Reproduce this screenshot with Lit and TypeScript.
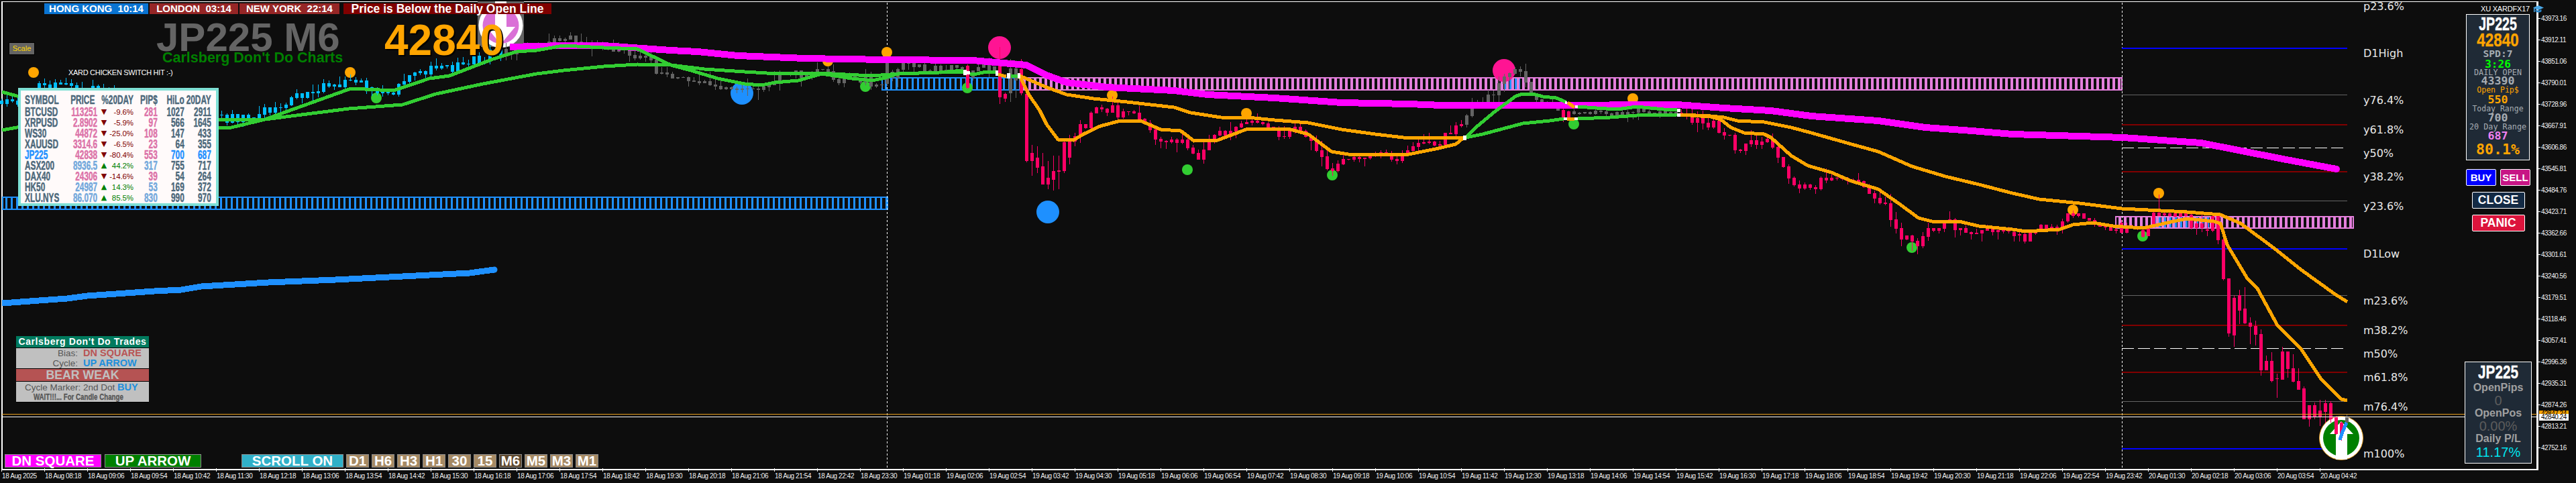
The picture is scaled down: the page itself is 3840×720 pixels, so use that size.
import { LitElement, html, svg, css } from 'lit'
import { customElement } from 'lit/decorators.js'

type Pt = [number, number]
// bodyTop, bodyBottom, wickTop, wickBottom
type Bar = [number, number, number, number]

// chart geometry is read straight from the screenshot, in page pixels
const candlePath: Pt[] = [
  [2, 150], [28, 152], [45, 128], [64, 125], [115, 130], [200, 150], [325, 178], [340, 175], [385, 172],
  [400, 160], [430, 155], [445, 143], [470, 135], [490, 125], [515, 120], [530, 122], [560, 140], [590, 137],
  [595, 125], [610, 113], [640, 105], [680, 100], [700, 92], [725, 85], [740, 75], [750, 75], [800, 68],
  [830, 55], [840, 55], [870, 62], [900, 70], [950, 80], [975, 100], [1000, 113], [1050, 123], [1070, 130],
  [1100, 133], [1120, 133], [1150, 128], [1155, 115], [1200, 110], [1215, 100], [1235, 105], [1250, 118],
  [1280, 120], [1315, 122], [1345, 100], [1390, 100], [1440, 100], [1470, 100], [1500, 115], [1522, 118],
  [1600, 210], [1610, 192], [1625, 175], [1640, 160], [1660, 165], [1680, 170], [1700, 180], [1715, 200],
  [1740, 210], [1750, 205], [1765, 210], [1775, 232], [1785, 238], [1795, 220], [1815, 200], [1830, 198],
  [1850, 190], [1860, 175], [1880, 187], [1900, 198], [1930, 192], [1950, 205], [1965, 220], [1975, 242],
  [1990, 256], [2000, 240], [2010, 235], [2030, 235], [2060, 228], [2080, 238], [2100, 222], [2120, 212],
  [2130, 210], [2145, 215], [2160, 195], [2175, 182], [2190, 165], [2210, 148], [2230, 140], [2240, 115],
  [2260, 110], [2270, 115], [2280, 140], [2300, 150], [2320, 155], [2330, 170], [2355, 170], [2380, 165],
  [2400, 170], [2430, 168], [2440, 160], [2460, 168], [2500, 168], [2510, 175], [2530, 183], [2560, 185],
  [2565, 200], [2580, 210], [2590, 222], [2610, 210], [2630, 215], [2640, 212], [2650, 238], [2660, 260],
  [2680, 272], [2690, 275], [2700, 283], [2715, 270], [2725, 268], [2745, 268], [2770, 272], [2785, 290],
  [2800, 295], [2810, 308], [2820, 330], [2835, 352], [2850, 363], [2860, 362], [2870, 349], [2880, 340],
  [2900, 330], [2920, 338], [2940, 342], [2960, 340], [3002, 348],
]

// the bars that matter get exact values
const fixedBars: Record<number, Bar> = {
  1322: [88, 125, 84, 128], 1442: [98, 131, 96, 133], 1490: [94, 145, 70, 155], 1498: [140, 147, 138, 152],
  1506: [102, 139, 88, 152], 1514: [102, 120, 90, 146], 1522: [103, 139, 88, 142], 1530: [140, 240, 135, 242],
  1538: [228, 240, 216, 262], 1546: [235, 250, 218, 258], 1554: [248, 275, 228, 274], 1562: [265, 275, 240, 282],
  1570: [255, 268, 232, 284], 1578: [254, 256, 232, 282], 1586: [212, 255, 210, 258],
  3002: [346, 352, 340, 360], 3010: [349, 351, 346, 360], 3018: [349, 360, 346, 363], 3026: [347, 360, 342, 360],
  3034: [346, 348, 343, 350], 3042: [335, 342, 334, 342], 3050: [335, 342, 335, 342], 3058: [338, 340, 334, 342],
  3066: [338, 342, 335, 350], 3074: [330, 340, 326, 348], 3082: [318, 330, 318, 332], 3090: [318, 322, 314, 325],
  3098: [318, 322, 318, 324], 3106: [318, 326, 318, 326], 3114: [325, 329, 325, 329], 3122: [328, 332, 325, 338],
  3130: [335, 338, 335, 338], 3138: [337, 339, 337, 343], 3146: [338, 344, 338, 344], 3154: [342, 344, 338, 348],
  3162: [332, 347, 328, 348], 3170: [340, 347, 332, 348], 3178: [337, 340, 335, 341], 3186: [340, 342, 338, 343],
  3194: [343, 353, 342, 354], 3202: [340, 352, 340, 352], 3210: [317, 335, 316, 335], 3218: [317, 322, 290, 322],
  3226: [318, 321, 316, 322], 3234: [318, 322, 317, 323], 3242: [318, 323, 317, 324], 3250: [318, 323, 317, 324],
  3258: [318, 322, 316, 324], 3266: [320, 340, 316, 342], 3274: [333, 340, 330, 350], 3282: [333, 340, 320, 346],
  3290: [342, 344, 330, 352], 3298: [322, 344, 320, 346], 3306: [322, 358, 322, 364], 3314: [357, 416, 355, 418],
  3322: [415, 497, 415, 502], 3330: [444, 500, 440, 517], 3338: [440, 463, 432, 483], 3346: [460, 482, 428, 483],
  3354: [481, 487, 473, 513], 3362: [486, 499, 478, 515], 3370: [498, 552, 491, 560], 3378: [538, 552, 530, 552],
  3386: [538, 568, 525, 570], 3394: [564, 565, 557, 593], 3402: [524, 566, 517, 566], 3410: [524, 550, 524, 563],
  3418: [549, 569, 528, 570], 3426: [568, 581, 549, 581], 3434: [579, 625, 576, 625], 3442: [604, 625, 604, 636],
  3450: [604, 621, 600, 625], 3458: [612, 621, 596, 635], 3466: [601, 614, 596, 630], 3474: [601, 625, 598, 630],
  3482: [621, 647, 620, 648], 3490: [630, 647, 628, 657], 3498: [621, 630, 617, 630],
}

function lerpPath(path: Pt[], x: number) {
  for (let i = 1; i < path.length; i++) {
    if (x <= path[i][0]) {
      const [x0, y0] = path[i - 1]
      const [x1, y1] = path[i]
      return y0 + ((y1 - y0) * (x - x0)) / (x1 - x0)
    }
  }
  return path[path.length - 1][1]
}

function candleColor(x: number) {
  if (x === 3498) return 'gray'
  if (x < 750) return 'cyan'
  if (x === 1442 || x === 1490 || x === 1498) return 'pink'
  if (x < 1518) return 'gray'
  if (x < 2186) return 'pink'
  if (x === 2330 || x === 2338) return 'pink'
  if (x < 2506) return 'gray'
  return 'pink'
}

// how far a bar strays from the path: the quiet stretches barely move
function noiseAt(x: number) {
  if ((x > 1000 && x < 1150) || (x > 2000 && x < 2130) || (x > 2350 && x < 2500)) return 5
  if (x > 2730 && x < 2800) return 7
  return 15
}

function buildCandles() {
  const d: Record<string, string> = { cyan: '', gray: '', pink: '' }
  let seed = 1337
  const rnd = () => {
    seed = (seed * 1664525 + 1013904223) % 4294967296
    return seed / 4294967296
  }
  let prev = lerpPath(candlePath, 2)
  for (let x = 2; x < 3500; x += 8) {
    let bar = fixedBars[x]
    if (!bar) {
      const close = lerpPath(candlePath, x) + (rnd() - 0.5) * noiseAt(x)
      const top = Math.round(Math.min(prev, close))
      const bot = Math.round(Math.max(prev, close)) + 1
      bar = [top, bot, top - Math.round(rnd() * rnd() * 18), bot + Math.round(rnd() * rnd() * 16)]
      prev = close
    } else {
      prev = (bar[0] + bar[1]) / 2
    }
    const [bt, bb, wt, wb] = bar
    d[candleColor(x)] += `M${x - 2} ${bt}h5v${bb - bt}h-5zM${x} ${wt}h1v${wb - wt}h-1z`
  }
  return d
}

const candles = buildCandles()

function zone(x1: number, x2: number, y1: number, y2: number, bar: number) {
  let d = `M${x1} ${y1}H${x2}V${y2}H${x1}zM${x1 + 2} ${y1 + 2}V${y2 - 2}H${x2 - 2}V${y1 + 2}z`
  for (let x = x1 + 5; x < x2 - 2; x += 8) d += `M${x} ${y1}h${bar}v${y2 - y1}h-${bar}z`
  return d
}

const blueZones = [
  zone(3, 1324, 293, 313, 3),
  zone(1314, 1522, 115, 135, 3),
  zone(2237, 2266, 115, 135, 3),
  zone(3213, 3293, 322, 341, 3),
].join('')

const pinkZones = [zone(1520, 3164, 115, 135, 4), zone(3153, 3509, 322, 341, 4)].join('')

const green: Pt[][] = [
  [[3, 137], [25, 143], [60, 150]],
  [[3, 194], [25, 190], [60, 188]],
  [[325, 190], [345, 190], [395, 178], [523, 132], [587, 135], [640, 117], [670, 113], [735, 88], [770, 77], [800, 75],
   [840, 68], [900, 71], [950, 73], [1000, 97], [1030, 105], [1070, 117], [1110, 125], [1135, 127], [1155, 123],
   [1190, 120], [1225, 110], [1270, 117], [1300, 120], [1320, 116], [1338, 110], [1400, 108], [1436, 105]],
  [[325, 178], [395, 178], [520, 162], [600, 156], [650, 140], [720, 125], [800, 110], [840, 105], [900, 99], [950, 96],
   [1000, 97], [1050, 103], [1110, 107], [1160, 110], [1220, 109], [1300, 113], [1340, 110], [1400, 108], [1436, 107]],
  [[1446, 110], [1456, 110], [1470, 107], [1484, 107]],
  [[1507, 113], [1517, 113]],
  [[2185, 205], [2200, 190], [2230, 165], [2260, 143], [2270, 140], [2285, 140], [2300, 144], [2320, 146], [2334, 152]],
  [[2185, 205], [2210, 200], [2240, 192], [2270, 184], [2310, 180], [2331, 177]],
  [[2352, 159], [2380, 161], [2410, 163], [2440, 159], [2480, 163], [2500, 164]],
  [[2352, 177], [2400, 175], [2440, 172], [2500, 171]],
]

const orange: Pt[][] = [
  [[1488, 111], [1500, 114]],
  [[1520, 113], [1533, 140], [1550, 165], [1560, 185], [1577, 208], [1600, 209], [1615, 200], [1640, 188], [1670, 180],
   [1700, 180], [1730, 193], [1760, 195], [1780, 210], [1815, 209], [1860, 192], [1920, 192], [1950, 200], [1985, 226],
   [2010, 230], [2050, 230], [2100, 230], [2120, 226], [2140, 222], [2170, 215], [2181, 206]],
  [[1520, 113], [1560, 130], [1590, 141], [1630, 147], [1680, 152], [1750, 160], [1775, 168], [1820, 175], [1870, 176],
   [1900, 179], [1950, 183], [2000, 193], [2050, 200], [2100, 206], [2181, 205]],
  [[2337, 153], [2347, 160]],
  [[2336, 177], [2347, 177]],
  [[2505, 171], [2550, 173], [2570, 175], [2590, 180], [2630, 182], [2670, 190], [2700, 198], [2760, 215], [2800, 226],
   [2850, 248], [2900, 263], [2950, 275], [3000, 288], [3040, 297], [3100, 303], [3163, 311], [3260, 316], [3310, 320],
   [3340, 333], [3390, 370], [3430, 402], [3480, 438], [3499, 450]],
  [[2505, 171], [2550, 174], [2565, 178], [2580, 190], [2600, 198], [2630, 200], [2640, 205], [2670, 232], [2695, 247],
   [2730, 257], [2760, 270], [2800, 282], [2830, 303], [2860, 325], [2880, 330], [2920, 330], [2950, 337], [3000, 342],
   [3020, 345], [3070, 342], [3090, 335], [3120, 332], [3150, 337], [3195, 340], [3240, 330], [3260, 326], [3300, 330],
   [3310, 333], [3320, 365], [3350, 415], [3365, 430], [3395, 485], [3430, 520], [3460, 565], [3490, 595], [3499, 597]],
]

const magenta: Pt[] = [
  [760, 70], [840, 68], [900, 68], [1000, 75], [1040, 77], [1100, 83], [1200, 87], [1320, 89], [1450, 90], [1530, 97],
  [1560, 112], [1590, 123], [1650, 130], [1750, 135], [1800, 141], [1900, 146], [2000, 153], [2100, 155], [2150, 157],
  [2300, 157], [2500, 156], [2570, 161], [2640, 165], [2700, 173], [2800, 180], [2870, 190], [2940, 195], [3000, 200],
  [3165, 205], [3281, 213], [3403, 237], [3483, 252],
]

const dodger: Pt[] = [
  [3, 452], [100, 445], [130, 441], [230, 434], [270, 432], [300, 427], [400, 421], [500, 417], [600, 412], [700, 407], [737, 402],
]

const dots: [number, number, number, string][] = [
  [50, 108, 8, '#ffa500'], [522, 108, 8, '#ffa500'], [1234, 91, 8, '#ffa500'], [1322, 78, 8, '#ffa500'],
  [1658, 142, 8, '#ffa500'], [1858, 169, 8, '#ffa500'], [2434, 147, 8, '#ffa500'], [3218, 288, 8, '#ffa500'],
  [3090, 313, 8, '#ffa500'],
  [561, 146, 8, '#32cd32'], [1290, 129, 8, '#32cd32'], [1442, 131, 8, '#32cd32'], [1770, 253, 8, '#32cd32'],
  [1986, 261, 8, '#32cd32'], [2346, 185, 8, '#32cd32'], [2850, 369, 8, '#32cd32'], [3194, 352, 8, '#32cd32'],
  [1490, 71, 17, '#ff1493'], [2242, 105, 17, '#ff1493'], [1106, 139, 17, '#1e90ff'], [1562, 316, 17, '#1e90ff'],
]

// white ticks where the averages change colour
const flips: [number, number, number, number][] = [
  [1436, 104, 5, 8], [1441, 106, 5, 5], [1484, 105, 4, 8], [1501, 109, 5, 8], [1517, 109, 4, 8], [2181, 202, 5, 7],
  [2333, 151, 3, 4], [2348, 157, 4, 4], [2331, 175, 5, 4], [2347, 175, 5, 4], [2500, 162, 5, 5], [2500, 169, 5, 5],
]

const fibs: [number, string, number, boolean][] = [
  [71, '#0000ff', 2, false], [141, '#646464', 1, false], [185, '#800000', 2, false], [220, '#ffffff', 1, true],
  [255, '#800000', 2, false], [299, '#646464', 1, false], [370, '#0000ff', 2, false], [440, '#646464', 1, false],
  [484, '#800000', 2, false], [519, '#ffffff', 1, true], [554, '#800000', 2, false], [598, '#646464', 1, false],
  [668, '#0000ff', 2, false],
]

const fibLabels: [string, number][] = [
  ['p23.6%', 0], ['D1High', 70], ['y76.4%', 140], ['y61.8%', 184], ['y50%', 219], ['y38.2%', 254], ['y23.6%', 298],
  ['D1Low', 369], ['m23.6%', 439], ['m38.2%', 483], ['m50%', 518], ['m61.8%', 553], ['m76.4%', 597], ['m100%', 667],
]

const axis = [
  '43973.16', '43912.11', '43851.06', '43790.01', '43728.96', '43667.91', '43606.86', '43545.81', '43484.76', '43423.71',
  '43362.66', '43301.61', '43240.56', '43179.51', '43118.46', '43057.41', '42996.36', '42935.31', '42874.26', '42813.21',
  '42752.16',
]

function timeLabels() {
  const out = ['18 Aug 2025']
  let day = 18
  let mins = 8 * 60 + 18
  for (let i = 1; i < 55; i++) {
    const hh = String(Math.floor(mins / 60)).padStart(2, '0')
    const mm = String(mins % 60).padStart(2, '0')
    out.push(`${day} Aug ${hh}:${mm}`)
    mins += 48
    if (mins >= 24 * 60) {
      // the market is shut for the first hour of the day
      mins = mins - 24 * 60 + 60
      day++
    }
  }
  return out
}

type Row = [string, string, string, string, boolean, string, string, string, string]
const watch: Row[] = [
  ['BTCUSD', '113251', 'dn', '-9.6%', false, '281', 'dn', '1027', '2911'],
  ['XRPUSD', '2.8902', 'dn', '-5.9%', false, '97', 'dn', '566', '1645'],
  ['WS30', '44872', 'dn', '-25.0%', false, '108', 'dn', '147', '433'],
  ['XAUUSD', '3314.6', 'dn', '-6.5%', false, '23', 'dn', '64', '355'],
  ['JP225', '42838', 'dn', '-80.4%', true, '553', 'dn', '700', '687'],
  ['ASX200', '8936.5', 'up', '44.2%', false, '317', 'up', '755', '717'],
  ['DAX40', '24306', 'dn', '-14.6%', false, '39', 'dn', '54', '264'],
  ['HK50', '24987', 'up', '14.3%', false, '53', 'up', '169', '372'],
  ['XLU.NYS', '86.070', 'up', '85.5%', false, '830', 'up', '990', '970'],
]

const timeframes = ['D1', 'H6', 'H3', 'H1', '30', '15', 'M6', 'M5', 'M3', 'M1']

const pts = (p: Pt[]) => p.map((q) => q.join(',')).join(' ')

@customElement('app-root')
export class AppRoot extends LitElement {
  static styles = css`
    :host {
      display: block;
      width: 3840px;
      height: 720px;
      background: #0d0d0d;
      font-family: 'Liberation Sans', Arial, sans-serif;
      color: #fff;
      overflow: hidden;
    }
    .page {
      position: relative;
      width: 3840px;
      height: 720px;
      overflow: hidden;
    }
    .main {
      display: flex;
      height: 701px;
    }
    .frame {
      box-sizing: border-box;
      width: 3782px;
      height: 699px;
      margin: 2px 0 0 2px;
      border: solid #fff;
      border-width: 1px 3px 2px 2px;
    }
    .axis {
      display: flex;
      flex-direction: column;
      padding-top: 11px;
      width: 56px;
    }
    .axis span {
      position: relative;
      height: 32px;
      line-height: 33px;
      padding-left: 4px;
      font-size: 10px;
      letter-spacing: -0.5px;
      color: #f2f2f2;
    }
    .axis span::before {
      content: '';
      position: absolute;
      left: 0;
      top: 16px;
      width: 3px;
      height: 1px;
      background: #fff;
    }
    .times {
      display: flex;
      margin-left: 2px;
      height: 19px;
    }
    .times span {
      position: relative;
      flex: 0 0 64px;
      padding-left: 1px;
      box-sizing: border-box;
      line-height: 17px;
      font-size: 10px;
      letter-spacing: -0.4px;
      color: #f2f2f2;
      white-space: nowrap;
    }
    .times span::before {
      content: '';
      position: absolute;
      left: 0;
      top: -3px;
      width: 1px;
      height: 5px;
      background: #fff;
    }
    .plot {
      position: absolute;
      left: 0;
      top: 0;
    }
    .tag {
      position: absolute;
      left: 3785px;
      width: 44px;
      height: 10px;
      line-height: 10px;
      padding-left: 3px;
      box-sizing: border-box;
      font-size: 10px;
      letter-spacing: -0.5px;
      color: #000;
    }
    .tag-open {
      top: 612px;
      background: #ffa500;
    }
    .tag-now {
      top: 617px;
      background: #fff;
    }
    .sessions {
      position: absolute;
      left: 66px;
      top: 5px;
      display: flex;
      height: 16px;
      font-weight: 700;
      font-size: 15px;
      line-height: 16px;
      white-space: pre;
    }
    .sessions div {
      text-align: center;
      margin-right: 2px;
    }
    .hk {
      width: 155px;
      background: #0a74d2;
    }
    .ldn {
      width: 132px;
      background: #962626;
    }
    .ny {
      width: 149px;
      margin-right: 6px !important;
      background: #962626;
    }
    .below {
      width: 310px;
      background: #800000;
      font-size: 17.5px;
    }
    .scale {
      position: absolute;
      left: 13px;
      top: 63px;
      width: 39px;
      height: 19px;
      box-sizing: border-box;
      background: #646464;
      border: 1px solid #000;
      color: #ffd700;
      font-size: 11px;
      line-height: 17px;
      text-align: center;
    }
    .title,
    .quote,
    .slogan {
      position: absolute;
      font-weight: 700;
      white-space: nowrap;
    }
    .title {
      left: 233px;
      top: 26px;
      font-size: 60px;
      line-height: 60px;
      color: #646464;
    }
    .slogan {
      left: 242px;
      top: 74px;
      font-size: 21.5px;
      line-height: 24px;
      color: #008000;
    }
    .quote {
      left: 573px;
      top: 28px;
      font-size: 64px;
      line-height: 64px;
      color: #ffa500;
      text-shadow: 2px 2px 0 #000;
    }
    .note {
      position: absolute;
      left: 102px;
      top: 102px;
      font-size: 11px;
      line-height: 13px;
      letter-spacing: -0.3px;
      white-space: nowrap;
    }
    /* no condensed face is installed, so the grid is laid out wide and squeezed */
    .watch {
      position: absolute;
      left: 27px;
      top: 131px;
      box-sizing: border-box;
      width: 299px;
      height: 176px;
      padding: 6px 0 0 6px;
      background: #fffafa;
      border: 4px solid #7fe0d5;
    }
    .watch-grid {
      display: grid;
      width: 434px;
      grid-template-columns: 94px 75px 31px 53px 56px 62.5px 62.5px;
      grid-template-rows: 18px;
      grid-auto-rows: 16px;
      transform: scaleX(0.64);
      transform-origin: left top;
      font-weight: 700;
      font-size: 18.5px;
      line-height: 16px;
      color: #4c687a;
      -webkit-text-stroke: 0.45px currentColor;
      white-space: nowrap;
      text-align: right;
    }
    .watch-grid .sym {
      text-align: left;
    }
    .watch-grid .hp {
      padding-right: 6px;
    }
    .watch-grid .pink {
      color: #dc72a8;
    }
    .watch-grid .sky {
      color: #72a8dc;
    }
    .watch-grid .hot {
      color: #1e90ff;
    }
    .watch-grid .arrow {
      font-family: 'DejaVu Sans', sans-serif;
      font-size: 11px;
      text-align: center;
      transform: scaleX(1.56);
      -webkit-text-stroke: 0;
    }
    .watch-grid .pct {
      font-weight: 400;
      font-size: 11.5px;
      letter-spacing: -0.1px;
      transform: scaleX(1.56);
      transform-origin: right center;
      -webkit-text-stroke: 0;
    }
    .neg {
      color: #800000;
    }
    .pos {
      color: #008000;
    }
    .trades {
      position: absolute;
      left: 24px;
      top: 501px;
      width: 198px;
      display: flex;
      flex-direction: column;
      gap: 1px;
      background: #000;
      padding: 0 0 1px;
    }
    .trades > div {
      background: #c0c0c0;
      color: #555;
    }
    .trades .head {
      height: 17px;
      line-height: 17px;
      background: #007a5e;
      color: #fff;
      font-weight: 700;
      font-size: 14px;
      letter-spacing: 0.6px;
      text-align: center;
    }
    .trades .bias {
      height: 30px;
      font-size: 13.5px;
      line-height: 15px;
    }
    .trades .line {
      display: grid;
      grid-template-columns: 92px 1fr;
      column-gap: 8px;
    }
    .trades .line span:first-child {
      text-align: right;
    }
    .trades b {
      font-size: 14.5px;
    }
    .b-red {
      color: #b85555;
    }
    .b-blue {
      color: #1e8fdc;
    }
    .trades .bear {
      height: 18px;
      line-height: 18px;
      background: #b55353;
      color: #c0c0c0;
      font-weight: 700;
      font-size: 17.7px;
      text-align: center;
    }
    .trades .marker {
      height: 30px;
      padding-left: 13px;
      font-size: 13.5px;
      line-height: 17px;
      white-space: nowrap;
    }
    .trades .wait {
      display: block;
      width: 185px;
      margin-left: -13px;
      line-height: 12px;
      font-weight: 700;
      font-size: 13.5px;
      text-align: center;
      transform: scaleX(0.72);
      -webkit-text-stroke: 0.3px currentColor;
    }
    .toolbar {
      position: absolute;
      left: 7px;
      top: 677px;
      display: flex;
      gap: 4px;
      height: 20px;
    }
    .btn {
      box-sizing: border-box;
      width: 34px;
      height: 20px;
      border: 1px solid #8c8c8c;
      background: #a68a64;
      font-weight: 700;
      font-size: 20.5px;
      line-height: 18px;
      text-align: center;
      white-space: nowrap;
    }
    .btn.wide {
      width: 144px;
      margin-right: 1px;
    }
    .btn.dn {
      background: #ff00ff;
    }
    .btn.up {
      background: #008000;
      margin-right: 56px;
    }
    .btn.scroll {
      width: 152px;
      background: #30b0c8;
    }
    .btn.on {
      background: #5f4a30;
    }
    .acct {
      position: absolute;
      left: 3698px;
      top: 7px;
      display: flex;
      align-items: center;
      gap: 5px;
      font-size: 11px;
      line-height: 13px;
      letter-spacing: -0.2px;
      white-space: nowrap;
    }
    .info {
      position: absolute;
      box-sizing: border-box;
      background: #1f2a36;
      border: 1px solid #fff;
      text-align: center;
      white-space: nowrap;
    }
    .info-a {
      left: 3676px;
      top: 21px;
      width: 95px;
      height: 218px;
      padding-top: 1px;
      font-family: 'DejaVu Sans Mono', monospace;
    }
    .info-a div {
      font-size: 11.5px;
      color: #a6acb2;
    }
    .info-a .h26 {
      height: 26px;
      line-height: 26px;
      font-family: 'Liberation Sans', sans-serif;
      font-weight: 700;
      font-size: 28px;
      color: #fff;
      transform: scaleX(0.7);
      -webkit-text-stroke: 0.4px currentColor;
    }
    .info-a .h22 {
      height: 22px;
      line-height: 22px;
      font-family: 'Liberation Sans', sans-serif;
      font-weight: 700;
      font-size: 28px;
      color: #ffa500;
      transform: scaleX(0.8);
      -webkit-text-stroke: 0.4px currentColor;
    }
    .info-a .spd {
      height: 18px;
      line-height: 18px;
      font-size: 14.7px;
      font-weight: 700;
    }
    .info-a .clock {
      height: 13px;
      line-height: 13px;
      font-size: 16px;
      font-weight: 700;
      color: #00ff00;
    }
    .info-a .cap {
      height: 12px;
      line-height: 12px;
      font-size: 11.8px;
    }
    .info-a .num {
      height: 13px;
      line-height: 13px;
      font-size: 16.6px;
      font-weight: 700;
    }
    .info-a .amber {
      color: #ffa500;
    }
    .info-a .t15 {
      height: 15px;
      line-height: 15px;
    }
    .info-a .t14 {
      height: 14px;
      line-height: 14px;
    }
    .info-a .violet {
      height: 16px;
      line-height: 16px;
      color: #f080f0;
    }
    .info-a .pctbig {
      height: 24px;
      line-height: 24px;
      font-size: 21.6px;
      font-weight: 700;
      color: #ffa500;
    }
    .orders {
      position: absolute;
      left: 3676px;
      top: 252px;
      width: 96px;
      display: flex;
      flex-wrap: wrap;
      justify-content: center;
      gap: 9px 6px;
    }
    .order {
      box-sizing: border-box;
      height: 25px;
      border: 1px solid #fff;
      border-radius: 2px;
      font-weight: 700;
      text-align: center;
      font-size: 15px;
      line-height: 23px;
      width: 45px;
    }
    .order.big {
      width: 79px;
      font-size: 17.5px;
    }
    .buy {
      background: #0000ff;
    }
    .sell {
      background: #c71585;
    }
    .close {
      background: #132a44;
    }
    .panic {
      background: #dc143c;
    }
    .info-b {
      left: 3674px;
      top: 539px;
      width: 100px;
      height: 152px;
      padding-top: 2px;
      border-width: 1.5px;
    }
    .info-b .name {
      height: 26px;
      line-height: 26px;
      font-size: 28px;
      font-weight: 700;
      transform: scaleX(0.74);
      -webkit-text-stroke: 0.4px currentColor;
    }
    .info-b .lbl {
      height: 19px;
      line-height: 19px;
      font-size: 16px;
      font-weight: 700;
      color: #a0a0a0;
    }
    .info-b .lcd {
      height: 19px;
      line-height: 20px;
      font-size: 20px;
      color: #5c5c5c;
    }
    .info-b .gain {
      height: 23px;
      line-height: 23px;
      font-size: 20px;
      color: #00e5ee;
    }
    .fib {
      position: absolute;
      left: 3523px;
      height: 20px;
      line-height: 20px;
      font-family: 'DejaVu Sans', sans-serif;
      font-size: 16px;
      color: #e8e8e8;
    }
  `

  private renderPlot() {
    return svg`
      <svg class="plot" width="3840" height="720" viewBox="0 0 3840 720">
        <g shape-rendering="crispEdges">
          <path d=${blueZones} fill="#1e90ff" />
          <path d=${pinkZones} fill="#e47fdc" />
          <line x1="1322.5" y1="4" x2="1322.5" y2="699" stroke="#fff" stroke-dasharray="3 3" />
          <line x1="3163.5" y1="4" x2="3163.5" y2="699" stroke="#fff" stroke-dasharray="3 3" />
          ${fibs.map(([y, c, w, dash]) =>
            dash
              ? svg`<line x1="3163" y1=${y + 0.5} x2="3494" y2=${y + 0.5} stroke=${c} stroke-dasharray="18 6" />`
              : svg`<rect x="3163" y=${y} width="336" height=${w} fill=${c} />`,
          )}
        </g>
        ${dots.map(([x, y, r, c]) => svg`<circle cx=${x} cy=${y} r=${r} fill=${c} />`)}
        ${this.renderBadges()}
        <g shape-rendering="crispEdges">
          <path d=${candles.cyan} fill="#00bfff" />
          <path d=${candles.gray} fill="#646464" />
          <path d=${candles.pink} fill="#ff0066" />
          <rect x="3" y="617" width="3779" height="1" fill="#e8a020" />
          <rect x="3" y="621" width="3779" height="1" fill="#fff" />
          <polyline points=${pts(magenta)} fill="none" stroke="#ff00ff" stroke-width="10" />
          <polyline points=${pts(dodger)} fill="none" stroke="#1e90ff" stroke-width="9" />
          ${orange.map((l) => svg`<polyline points=${pts(l)} fill="none" stroke="#ffa500" stroke-width="5" />`)}
          ${green.map((l) => svg`<polyline points=${pts(l)} fill="none" stroke="#32cd32" stroke-width="5" />`)}
          ${flips.map(([x, y, w, h]) => svg`<rect x=${x} y=${y} width=${w} height=${h} fill="#fff" />`)}
          <polyline points="3488,656 3491,646 3498,630" fill="none" stroke="#1e90ff" stroke-width="5" />
        </g>
        <circle cx="737" cy="402" r="4.5" fill="#1e90ff" />
        <circle cx="3483" cy="252" r="5" fill="#ff00ff" />
      </svg>
    `
  }

  // the two arrow discs the indicator prints on the chart
  private renderBadges() {
    return svg`
      <rect x="712" y="2" width="69" height="68" fill="#646464" />
      <circle cx="746.5" cy="38" r="33" fill="#fff" />
      <circle cx="746.5" cy="38" r="27" fill="#da70d6" />
      <path d="M738 2h17v38h13l-21.500 26-21.500-26h13z" fill="#fff" />
      <circle cx="3490" cy="653" r="32.500" fill="#fff" stroke="#e8a020" />
      <circle cx="3490" cy="653" r="27" fill="#008000" />
      <path d="M3490 628l18 19h-9v38h-17v-38h-9z" fill="#fff" />
    `
  }

  private renderWatch() {
    return html`
      <div class="watch">
        <div class="watch-grid">
          <span class="sym">SYMBOL</span><span class="hp">PRICE</span>
          <span style="grid-column: 3 / 5">%20DAY</span><span>PIP$</span><span>HiLo</span><span>20DAY</span>
          ${watch.map(
            ([sym, price, dir, pct, hot, pips, tone, hilo, day]) => html`
              <span class="sym ${hot ? 'hot' : ''}">${sym}</span>
              <span class=${tone === 'dn' ? 'pink' : 'sky'}>${price}</span>
              <span class="arrow ${dir === 'dn' ? 'neg' : 'pos'}">${dir === 'dn' ? '▼' : '▲'}</span>
              <span class="pct ${dir === 'dn' ? 'neg' : 'pos'}">${pct}</span>
              <span class=${tone === 'dn' ? 'pink' : 'sky'}>${pips}</span>
              <span class=${hot ? 'hot' : ''}>${hilo}</span>
              <span class=${hot ? 'hot' : ''}>${day}</span>
            `,
          )}
        </div>
      </div>
    `
  }

  render() {
    return html`
      <div class="page">
        <div class="main">
          <div class="frame"></div>
          <div class="axis">${axis.map((v) => html`<span>${v}</span>`)}</div>
        </div>
        <div class="times">${timeLabels().map((t) => html`<span>${t}</span>`)}</div>

        ${this.renderPlot()}

        <div class="tag tag-open">42847.24</div>
        <div class="tag tag-now">42840.24</div>

        <div class="sessions">
          <div class="hk">HONG KONG  10:14</div>
          <div class="ldn">LONDON  03:14</div>
          <div class="ny">NEW YORK  22:14</div>
          <div class="below">Price is Below the Daily Open Line</div>
        </div>
        <div class="scale">Scale</div>
        <div class="title">JP225 M6</div>
        <div class="slogan">Carlsberg Don't Do Charts</div>
        <div class="quote">42840</div>
        <div class="note">XARD CHICKEN SWITCH HIT :-)</div>

        ${this.renderWatch()}

        <div class="trades">
          <div class="head">Carlsberg Don't Do Trades</div>
          <div class="bias">
            <div class="line"><span>Bias:</span><b class="b-red">DN SQUARE</b></div>
            <div class="line"><span>Cycle:</span><b class="b-blue">UP ARROW</b></div>
          </div>
          <div class="bear">BEAR WEAK</div>
          <div class="marker">
            Cycle Marker: 2nd Dot <b class="b-blue">BUY</b>
            <span class="wait">WAIT!!!... For Candle Change</span>
          </div>
        </div>

        <div class="toolbar">
          <div class="btn wide dn">DN SQUARE</div>
          <div class="btn wide up">UP ARROW</div>
          <div class="btn scroll">SCROLL ON</div>
          ${timeframes.map((t) => html`<div class="btn ${t === 'M6' ? 'on' : ''}">${t}</div>`)}
        </div>

        ${fibLabels.map(([t, y]) => html`<div class="fib" style="top:${y}px">${t}</div>`)}

        <div class="acct">
          XU XARDFX17
          <svg width="16" height="13" viewBox="0 0 16 13">
            <path d="M8 1l8 3.500-8 3.500-8-3.500z" fill="#4aa8e8" />
            <path d="M3.500 7v3c2 2 7 2 9 0V7L8 9z" fill="#2a86c8" />
            <path d="M1 5v6h1.500V5z" fill="#4aa8e8" />
          </svg>
        </div>

        <div class="info info-a">
          <div class="h26">JP225</div>
          <div class="h22">42840</div>
          <div class="spd">SPD:7</div>
          <div class="clock">3:26</div>
          <div class="cap">DAILY OPEN</div>
          <div class="num">43390</div>
          <div class="t15 amber">Open Pip$</div>
          <div class="num amber">550</div>
          <div class="t14">Today Range</div>
          <div class="num t14">700</div>
          <div class="cap">20 Day Range</div>
          <div class="num violet">687</div>
          <div class="pctbig">80.1%</div>
        </div>

        <div class="orders">
          <div class="order buy">BUY</div>
          <div class="order sell">SELL</div>
          <div class="order big close">CLOSE</div>
          <div class="order big panic">PANIC</div>
        </div>

        <div class="info info-b">
          <div class="name">JP225</div>
          <div class="lbl">OpenPips</div>
          <div class="lcd">0</div>
          <div class="lbl">OpenPos</div>
          <div class="lcd">0.00%</div>
          <div class="lbl">Daily P/L</div>
          <div class="gain">11.17%</div>
        </div>
      </div>
    `
  }
}
